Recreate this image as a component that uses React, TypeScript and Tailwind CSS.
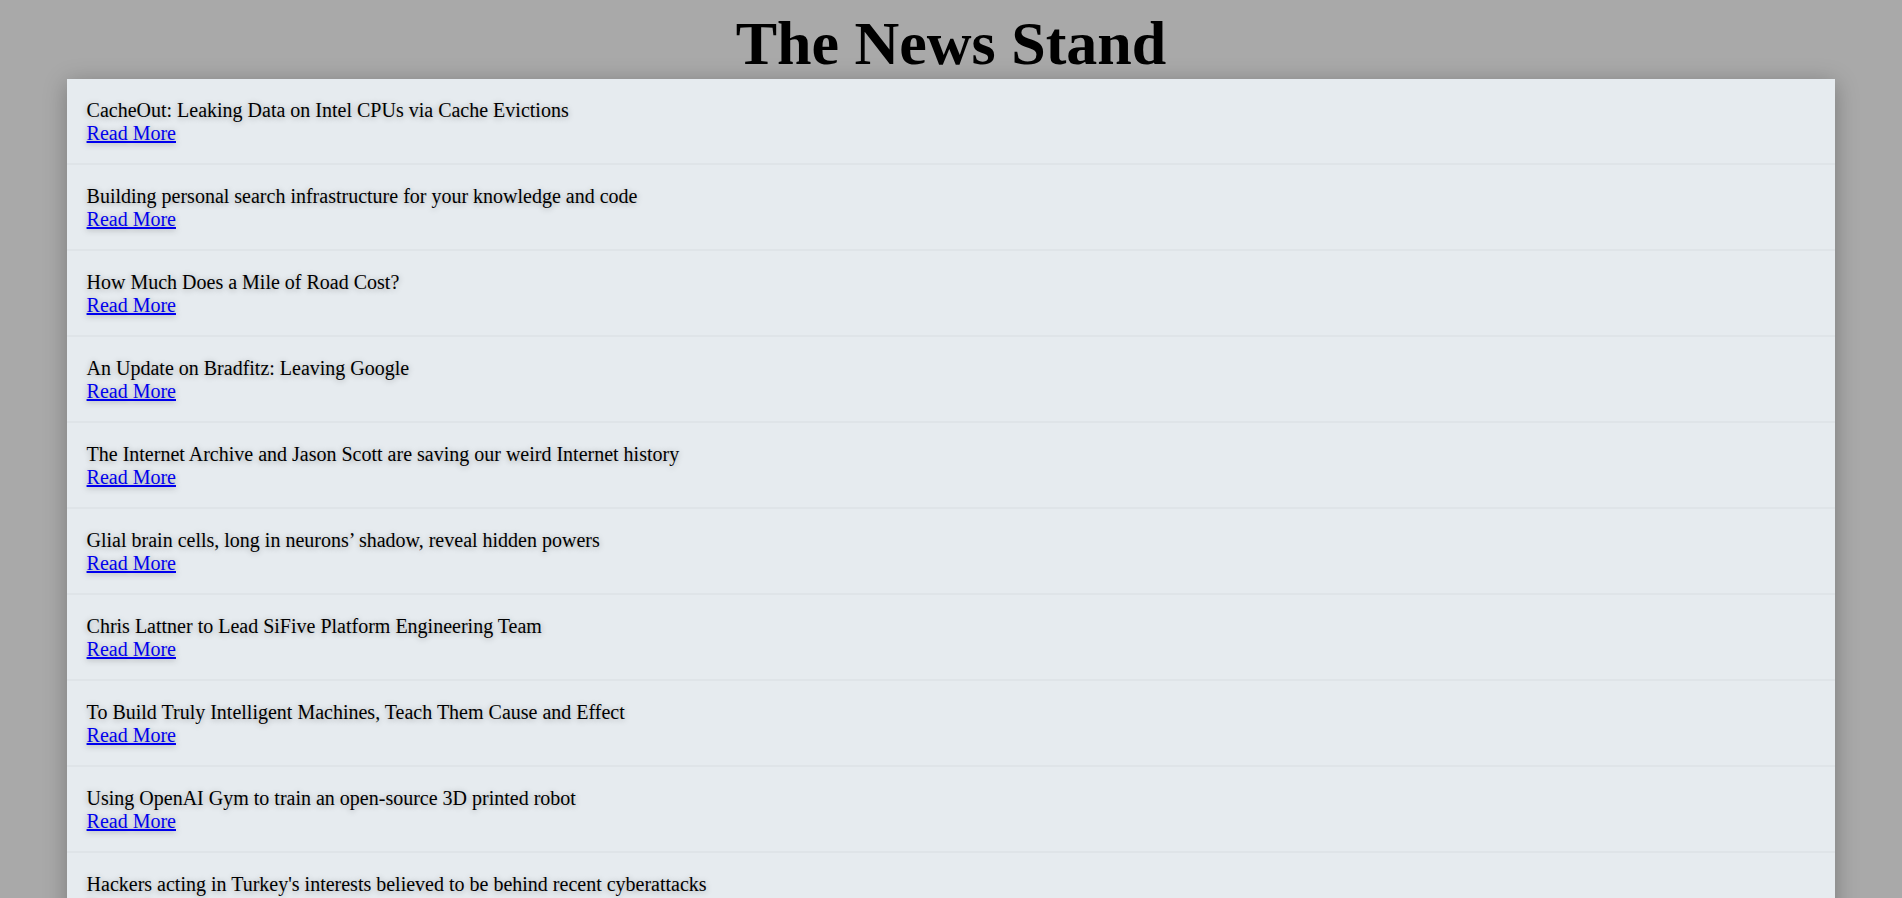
import React from 'react';

interface Story {
  id: number;
  title: string;
  url: string;
}

const stories: Story[] = [
  { id: 1, title: 'CacheOut: Leaking Data on Intel CPUs via Cache Evictions', url: '#' },
  { id: 2, title: 'Building personal search infrastructure for your knowledge and code', url: '#' },
  { id: 3, title: 'How Much Does a Mile of Road Cost?', url: '#' },
  { id: 4, title: 'An Update on Bradfitz: Leaving Google', url: '#' },
  { id: 5, title: 'The Internet Archive and Jason Scott are saving our weird Internet history', url: '#' },
  { id: 6, title: 'Glial brain cells, long in neurons’ shadow, reveal hidden powers', url: '#' },
  { id: 7, title: 'Chris Lattner to Lead SiFive Platform Engineering Team', url: '#' },
  { id: 8, title: 'To Build Truly Intelligent Machines, Teach Them Cause and Effect', url: '#' },
  { id: 9, title: 'Using OpenAI Gym to train an open-source 3D printed robot', url: '#' },
  { id: 10, title: "Hackers acting in Turkey's interests believed to be behind recent cyberattacks", url: '#' },
  { id: 11, title: 'Show HN: A minimal static site generator written in Go', url: '#' },
  { id: 12, title: 'The Art of Command Line', url: '#' }
];

const StoryRow: React.FC<{ story: Story }> = ({ story }) => {
  return (
    <li className="px-5 pt-5 pb-[18px] border-b-2 border-[#dfe4e8] [text-shadow:0_1px_6px_rgba(0,0,0,0.32)]">
      <div className="text-black">{story.title}</div>
      <a href={story.url} className="text-[#0000ee] underline">
        Read More
      </a>
    </li>
  );
};

const App: React.FC = () => {
  return (
    <div className="min-h-screen bg-[#a9a9a9] font-['Liberation_Serif','Times_New_Roman',serif] text-[20px] leading-[normal]">
      {/* Заголовок */}
      <h1 className="pt-[8px] text-center text-[62px] font-bold leading-[normal] text-black">
        The News Stand
      </h1>

      {/* Список новостей */}
      <ul className="mx-auto w-[93%] bg-[#e6ebef] shadow-[0_4px_22px_rgba(0,0,0,0.28)]">
        {stories.map((story) => (
          <StoryRow key={story.id} story={story} />
        ))}
      </ul>
    </div>
  );
};

export default App;
